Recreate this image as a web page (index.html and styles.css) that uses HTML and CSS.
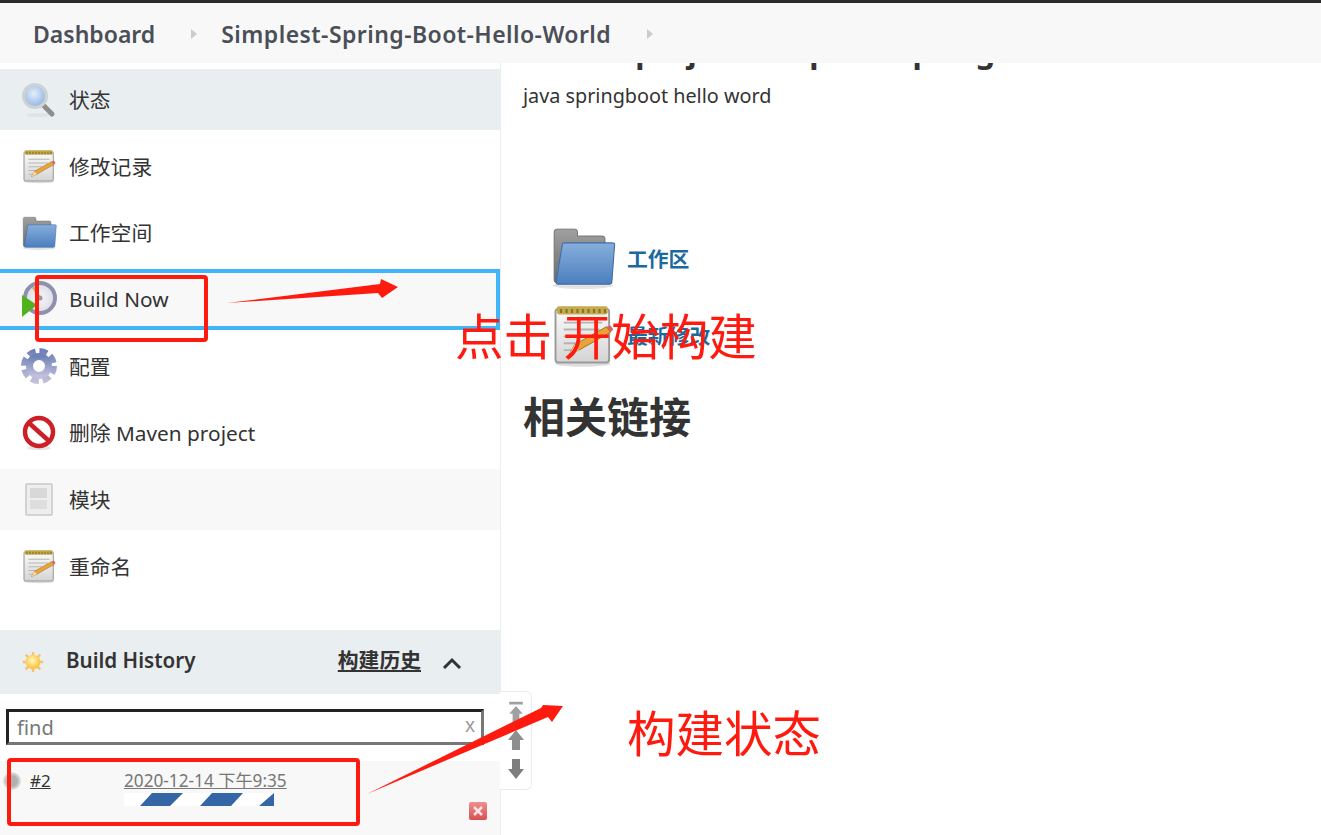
FILE: index.html
```html
<!DOCTYPE html>
<html lang="zh-CN">
<head>
  <meta charset="UTF-8">
  <title>Simplest-Spring-Boot-Hello-World</title>
  <link rel="stylesheet" href="styles.css">
</head>
<body>
  <!-- shared icons -->
  <svg class="defs" width="0" height="0">
    <defs>
      <linearGradient id="paper" x1="0" y1="0" x2="0" y2="1"><stop offset="0" stop-color="#fbfbfb"/><stop offset="1" stop-color="#d4d4d4"/></linearGradient>
      <linearGradient id="blue" x1="0" y1="0" x2="0" y2="1"><stop offset="0" stop-color="#86aedc"/><stop offset="1" stop-color="#4c7fbe"/></linearGradient>
      <linearGradient id="greyback" x1="0" y1="0" x2="0" y2="1"><stop offset="0" stop-color="#a0a0a0"/><stop offset="1" stop-color="#6a6a6a"/></linearGradient>
      <linearGradient id="gearfill" x1="0" y1="0" x2="0" y2="1"><stop offset="0" stop-color="#6f82b8"/><stop offset="1" stop-color="#c0bfdc"/></linearGradient>
      <radialGradient id="lens" cx="0.45" cy="0.4" r="0.6"><stop offset="0" stop-color="#e4eefa"/><stop offset="1" stop-color="#8fb4e2"/></radialGradient>
      <radialGradient id="sunfill" cx="0.45" cy="0.4" r="0.6"><stop offset="0" stop-color="#fff8c0"/><stop offset="1" stop-color="#f8c030"/></radialGradient>
      <radialGradient id="ball" cx="0.5" cy="0.5" r="0.5"><stop offset="0.55" stop-color="#b0b0b0"/><stop offset="1" stop-color="#e4e4e4"/></radialGradient>
      <radialGradient id="dial" cx="0.5" cy="0.5" r="0.5"><stop offset="0" stop-color="#f6f6f8"/><stop offset="1" stop-color="#dcdce6"/></radialGradient>
      <symbol id="ic-notepad" viewBox="0 0 48 48">
        <ellipse cx="24" cy="45" rx="20" ry="2" fill="#ddd"/>
        <rect x="4" y="5" width="39" height="39" rx="2" fill="url(#paper)" stroke="#9a9a9a" stroke-width="1.4"/>
        <rect x="5" y="3" width="37" height="6" rx="1.5" fill="#c4aa50"/>
        <path d="M8 5v3M12 5v3M16 5v3M20 5v3M24 5v3M28 5v3M32 5v3M36 5v3M40 5v3" stroke="#8a7420" stroke-width="1.6"/>
        <path d="M10 15h28M10 20h26M10 25h18M10 30h12M10 35h10" stroke="#b4b4b4" stroke-width="1.3"/>
        <path d="M14 38l4-7 23-13 3 4-23 13z" fill="#e8a33a" stroke="#a8701c" stroke-width="0.7"/>
        <path d="M41 18l3-1 2 3-2 2z" fill="#d86060"/>
        <path d="M14 38l4-7 3 4z" fill="#f4dcb0"/>
      </symbol>
      <symbol id="ic-folder" viewBox="0 0 48 48">
        <ellipse cx="24" cy="44" rx="22" ry="2.5" fill="#e2e2e2"/>
        <path d="M3 5q0-2 2-2h13q2 0 2 2v3h18q2 0 2 2v32H5q-2 0-2-2z" fill="url(#greyback)" stroke="#666" stroke-width="0.6"/>
        <path d="M9 14q0-1 1-1h35q2 0 2 1l-2 27q0 2-2 2H6q-2 0-1.500-2z" fill="url(#blue)" stroke="#3f6fa8" stroke-width="0.8"/>
      </symbol>
    </defs>
  </svg>

  <div class="topline"></div>

  <nav class="breadcrumb">
    <a class="crumb" href="#">Dashboard</a>
    <span class="crumb-sep"></span>
    <a class="crumb crumb-job" href="#">Simplest-Spring-Boot-Hello-World</a>
    <span class="crumb-sep"></span>
  </nav>

  <div class="page">
    <aside class="sidebar">
      <div class="tasks">
        <a class="task task-active" href="#">
          <svg class="task-icon" viewBox="0 0 36 36">
            <ellipse cx="17" cy="33" rx="12" ry="2" fill="#dfe3e5"/>
            <path d="M21 22l10 10" stroke="#8e8e8e" stroke-width="5" stroke-linecap="round"/>
            <circle cx="14" cy="14" r="11.500" fill="url(#lens)" stroke="#cfd2d4" stroke-width="3"/>
          </svg>
          <span>状态</span>
        </a>
        <a class="task" href="#">
          <svg class="task-icon"><use href="#ic-notepad"/></svg>
          <span>修改记录</span>
        </a>
        <a class="task" href="#">
          <svg class="task-icon"><use href="#ic-folder"/></svg>
          <span>工作空间</span>
        </a>
        <a class="task task-focus" href="#">
          <svg class="task-icon" viewBox="0 0 36 36">
            <circle cx="19" cy="17" r="15" fill="url(#dial)" stroke="#8f8fae" stroke-width="4"/>
            <path d="M19 17L12 6" stroke="#c8b060" stroke-width="2.500"/>
            <circle cx="19" cy="17" r="2.500" fill="#999"/>
            <path d="M1 14l15 10L1 36z" fill="#4fb41c"/>
          </svg>
          <span>Build Now</span>
        </a>
        <a class="task" href="#">
          <svg class="task-icon" viewBox="0 0 36 36">
            <circle cx="18" cy="18" r="15" fill="none" stroke="url(#gearfill)" stroke-width="6" stroke-dasharray="7.900 3.880"/>
            <circle cx="18" cy="18" r="9.500" fill="none" stroke="url(#gearfill)" stroke-width="7"/>
          </svg>
          <span>配置</span>
        </a>
        <a class="task" href="#">
          <svg class="task-icon" viewBox="0 0 36 36">
            <ellipse cx="18" cy="33" rx="12" ry="2" fill="#e4e4e4"/>
            <circle cx="18" cy="17" r="14" fill="#fff" stroke="#cc1f26" stroke-width="4.500"/>
            <path d="M8 8l20 18" stroke="#cc1f26" stroke-width="4.500"/>
          </svg>
          <span>删除 Maven project</span>
        </a>
        <a class="task task-soft" href="#">
          <svg class="task-icon" viewBox="0 0 36 36">
            <rect x="5" y="3" width="26" height="31" rx="1" fill="#eee" stroke="#c8c8c8" stroke-width="1.500"/>
            <rect x="9" y="7" width="17" height="10" fill="#d8d8d8"/>
            <rect x="9" y="19" width="17" height="9" fill="#dedede"/>
          </svg>
          <span>模块</span>
        </a>
        <a class="task" href="#">
          <svg class="task-icon"><use href="#ic-notepad"/></svg>
          <span>重命名</span>
        </a>
      </div>

      <section class="history">
        <header class="history-head">
          <svg class="sun" viewBox="0 0 24 24">
            <path d="M12 1v5M12 18v5M1 12h5M18 12h5M4 4l4 4M16 16l4 4M20 4l-4 4M8 16l-4 4" stroke="#f8c070" stroke-width="2.500"/>
            <circle cx="12" cy="12" r="8" fill="url(#sunfill)"/>
          </svg>
          <span class="history-title">Build History</span>
          <a class="history-trend" href="#">构建历史</a>
          <svg class="chevron" viewBox="0 0 20 12"><path d="M2 11l8-8 8 8" fill="none" stroke="#333" stroke-width="3"/></svg>
        </header>
        <div class="find">
          <input class="find-input" type="text" placeholder="find">
          <span class="find-clear">x</span>
        </div>
        <div class="build">
          <svg class="build-ball" viewBox="0 0 18 18"><circle cx="9" cy="9" r="9" fill="url(#ball)"/></svg>
          <a class="build-num" href="#">#2</a>
          <div class="build-info">
            <a class="build-date" href="#">2020-12-14 下午9:35</a>
            <svg class="build-progress" viewBox="0 0 150 13">
              <path d="M16 13L28 0h31L46 13zM76 13L88 0h31l-12 13zM135 13L150 0v13z" fill="#3465a4"/>
            </svg>
          </div>
          <span class="build-stop"><svg viewBox="0 0 18 18"><path d="M5 5l8 8M13 5l-8 8" stroke="#fbe4e4" stroke-width="2.500"/></svg></span>
        </div>
      </section>
    </aside>

    <main class="main">
      <h1 class="title">Maven project Simplest-Spring-Boot-Hello-World</h1>
      <p class="desc">java springboot hello word</p>
      <div class="links">
        <a class="link-row" href="#">
          <svg class="link-icon"><use href="#ic-folder"/></svg>
          <span>工作区</span>
        </a>
        <a class="link-row" href="#">
          <svg class="link-icon"><use href="#ic-notepad"/></svg>
          <span>最新修改</span>
        </a>
      </div>
      <h2 class="related">相关链接</h2>
    </main>
  </div>

  <div class="scroller">
    <svg viewBox="0 0 20 26"><path d="M2 1h16v3H2zM10 6l8 9h-4v10H6V15H2z" fill="#a0a0a0"/></svg>
    <svg viewBox="0 0 20 22"><path d="M10 1l8 10h-4v10H6V11H2z" fill="#8e8e8e"/></svg>
    <svg viewBox="0 0 20 22"><path d="M6 1h8v10h4l-8 10-8-10h4z" fill="#7e7e7e"/></svg>
  </div>

  <!-- red screenshot annotations -->
  <div class="mark mark-now"></div>
  <div class="mark mark-build"></div>
  <svg class="arrows" viewBox="0 0 1321 835">
    <path d="M227 303L380 284l1-5 17 8-16 11-4-5z" fill="#ff1a0f"/>
    <path d="M367 794L541 708l2-3 20 1-11 16-4-5z" fill="#ff1a0f"/>
  </svg>
  <span class="note note-start">点击 开始构建</span>
  <span class="note note-status">构建状态</span>
</body>
</html>
```

FILE: styles.css
```css
html, body {
  margin: 0;
  padding: 0;
  height: 835px;
  overflow: hidden;
}

body {
  position: relative;
  background: #fff;
  color: #333;
  font-family: "Noto Sans", "Noto Sans CJK SC", sans-serif;
  font-size: 20.8px;
}

a {
  color: inherit;
  text-decoration: none;
}

.defs {
  position: absolute;
}

.topline {
  height: 3px;
  background: #2b2b2b;
}

/* Breadcrumb */
.breadcrumb {
  position: relative;
  z-index: 2;
  display: flex;
  align-items: center;
  box-sizing: border-box;
  height: 60px;
  padding: 2px 0 0 33px;
  background: #f8f8f8;
}

.crumb {
  font-size: 23px;
  font-weight: 600;
  color: #4a4f57;
}

.crumb-job {
  letter-spacing: 0.44px;
}

.crumb-sep {
  width: 0;
  height: 0;
  margin: 0 24px 0 36px;
  border-left: 6px solid #ccc;
  border-top: 5px solid transparent;
  border-bottom: 5px solid transparent;
}

/* Page columns */
.page {
  display: flex;
  height: 772px;
}

.sidebar {
  flex: none;
  width: 500px;
  padding-top: 6px;
  border-right: 1px solid #eee;
}

.tasks {
  display: flex;
  flex-direction: column;
  gap: 5.67px;
}

.task {
  display: flex;
  align-items: center;
  gap: 12px;
  box-sizing: border-box;
  height: 61px;
  padding-left: 21px;
}

.task span {
  padding-bottom: 1px;
}

.task-icon {
  flex: none;
  width: 36px;
  height: 36px;
}

.task-active {
  background: #e9eef1;
}

.task-soft {
  background: #f8f8f8;
}

.task-focus {
  background: #f8f8f8;
  border: 4px solid #42b4f8;
  border-left: none;
}

/* Build history */
.history {
  margin-top: 33px;
}

.history-head {
  display: flex;
  align-items: center;
  height: 64px;
  padding-left: 22px;
  background: #e9eef1;
}

.sun {
  width: 22px;
  height: 22px;
  margin-right: 22px;
}

.history-title {
  margin-bottom: 4px;
  font-size: 20.6px;
  font-weight: 600;
  color: #333;
}

.history-trend {
  margin: 0 0 6px auto;
  font-weight: 600;
  text-decoration: underline;
}

.chevron {
  width: 20px;
  height: 12px;
  margin: 2px 38px 0 21px;
}

.find {
  position: relative;
  margin: 15px 16px 16px 6px;
}

.find-input {
  display: block;
  box-sizing: border-box;
  width: 100%;
  height: 36px;
  padding: 2px 8px 0;
  border: 3px solid;
  border-color: #222 #777 #777 #222;
  font: 20px "Noto Sans", sans-serif;
  outline: none;
}

.find-input::placeholder {
  color: #777;
}

.find-clear {
  position: absolute;
  right: 9px;
  top: 3px;
  color: #999;
  font-size: 19px;
}

.build {
  position: relative;
  display: flex;
  height: 74px;
  background: #f8f8f8;
}

.build-ball {
  flex: none;
  width: 18px;
  height: 18px;
  margin: 11px 9px 0 3px;
}

.build-num {
  width: 94px;
  margin-top: 8px;
  font-size: 17px;
  text-decoration: underline;
}

.build-info {
  display: flex;
  flex-direction: column;
  margin-top: 8px;
}

.build-date {
  font-size: 17.2px;
  line-height: 24px;
  color: #777;
  text-decoration: underline;
}

.build-progress {
  display: block;
  width: 150px;
  height: 13px;
  background: #fff;
}

.build-stop {
  position: absolute;
  left: 469px;
  top: 41px;
  width: 18px;
  height: 18px;
  border-radius: 2px;
  background: linear-gradient(#ec9090, #d85050);
}

.build-stop svg {
  display: block;
}

/* Main column */
.main {
  flex: 1;
  min-width: 0;
  padding-left: 22px;
}

.title {
  margin: -32px 0 11px;
  font-size: 31px;
  line-height: 40px;
  font-weight: 700;
  white-space: nowrap;
}

.desc {
  margin: 0;
  font-size: 19.8px;
  line-height: 28px;
}

.links {
  display: flex;
  flex-direction: column;
  margin: 109px 0 19px 27px;
}

.link-row {
  display: flex;
  align-items: center;
  gap: 11px;
  height: 77px;
  font-size: 20.8px;
  font-weight: 700;
  color: #1a6a9e;
}

.link-icon {
  flex: none;
  width: 66px;
  height: 66px;
}

.related {
  margin: 0;
  font-size: 42px;
  line-height: 50px;
  font-weight: 700;
}

/* Floating scroll buttons */
.scroller {
  position: absolute;
  left: 500px;
  top: 691px;
  display: flex;
  flex-direction: column;
  align-items: center;
  justify-content: space-around;
  box-sizing: border-box;
  width: 32px;
  height: 99px;
  padding: 6px 0;
  border: 1px solid #e8ecef;
  border-left: none;
  border-radius: 0 6px 6px 0;
  background: #fff;
}

.scroller svg {
  width: 20px;
  height: 22px;
}

/* Annotations */
.mark {
  position: absolute;
  box-sizing: border-box;
  border: 4px solid #ff1a0f;
  border-radius: 4px;
}

.mark-now {
  left: 35px;
  top: 275px;
  width: 173px;
  height: 67px;
}

.mark-build {
  left: 7px;
  top: 758px;
  width: 353px;
  height: 68px;
}

.arrows {
  position: absolute;
  left: 0;
  top: 0;
  width: 1321px;
  height: 835px;
  pointer-events: none;
}

.note {
  position: absolute;
  color: #ff1a0f;
  font-family: "Noto Sans CJK SC", sans-serif;
  font-size: 48.5px;
  font-weight: 400;
  line-height: 56px;
  white-space: nowrap;
}

.note-start {
  left: 455px;
  top: 306px;
}

.note-status {
  left: 627px;
  top: 703px;
}
```
